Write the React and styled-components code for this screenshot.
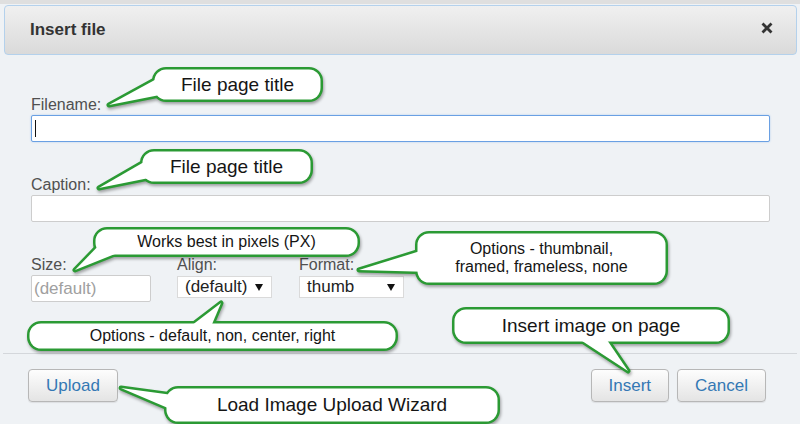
import React from "react";
import styled, { createGlobalStyle } from "styled-components";

const GREEN = "#2b9a34";

const GlobalStyle = createGlobalStyle`
  html, body { margin: 0; padding: 0; }
  body {
    font-family: "Liberation Sans", Arial, sans-serif;
    background: #eff2f5;
  }
  *, *::before, *::after { box-sizing: border-box; }
`;

const Dialog = styled.div`
  position: relative;
  width: 800px;
  height: 424px;
  display: flex;
  flex-direction: column;
  background: #eff2f5;
  border-top: 4px solid #dfdfdf;
  overflow: hidden;
`;

const Header = styled.header`
  flex: none;
  height: 50px;
  margin: 1px 3px 0 4px;
  padding: 0 23px 0 25px;
  display: flex;
  align-items: center;
  justify-content: space-between;
  border: 1px solid #b4d1ec;
  border-radius: 4px;
  background: linear-gradient(#f0f0f0, #dadada);
`;

const Title = styled.h1`
  margin: 0;
  font-size: 17px;
  font-weight: 700;
  color: #333;
`;

const CloseIcon = styled.svg`
  width: 12px;
  height: 12px;
  margin-top: -4px;
`;

const Form = styled.div`
  flex: 1;
  padding: 40px 30px 0 31px;
  display: flex;
  flex-direction: column;
  gap: 33px;
`;

const Field = styled.div`
  flex: none;
  display: flex;
  flex-direction: column;
  width: ${(p) => p.$width || "auto"};
`;

const Label = styled.label`
  height: 20px;
  line-height: 20px;
  font-size: 16px;
  color: #505050;
`;

const TextBox = styled.div`
  position: relative;
  height: 27px;
  width: ${(p) => p.$width || "100%"};
  display: flex;
  align-items: center;
  padding: 0 2px;
  background: #fff;
  border: 1px solid ${(p) => (p.$focused ? "#6aa0e3" : "#cdcdcd")};
  border-radius: 2px;
  box-shadow: ${(p) => (p.$focused ? "0 0 2px rgba(90,150,230,0.45)" : "none")};
  font-size: 17px;
  color: ${(p) => (p.$placeholder ? "#a0a0a0" : "#222")};
`;

const Caret = styled.span`
  width: 1px;
  height: 17px;
  margin-left: 1px;
  background: #111;
`;

const OptionsRow = styled.div`
  display: flex;
`;

const SelectBox = styled.div`
  width: ${(p) => p.$width};
  height: 22px;
  margin-top: 1px;
  padding: 0 8px 0 7px;
  display: flex;
  align-items: center;
  justify-content: space-between;
  background: #fff;
  border: 1px solid #dadada;
  font-size: 17px;
  color: #222;
`;

const Arrow = styled.svg`
  width: 8px;
  height: 8px;
`;

const Footer = styled.footer`
  flex: none;
  height: 71px;
  margin: 0 3px;
  padding: 15px 31px 0 25px;
  display: flex;
  justify-content: space-between;
  align-items: flex-start;
  border-top: 1px solid #d4d7db;
`;

const ButtonGroup = styled.div`
  display: flex;
  gap: 8px;
`;

const Button = styled.button`
  height: 33px;
  padding: 0 17px;
  font-family: "Liberation Sans", Arial, sans-serif;
  font-size: 17px;
  color: #3478b4;
  background: linear-gradient(#fdfdfd, #e4e4e4);
  border: 1px solid #b7b7b7;
  border-radius: 4px;
  box-shadow: 0 1px 1px rgba(0, 0, 0, 0.08);
`;

/* speech-bubble annotations laid over the form */
const Bubble = styled.div`
  position: absolute;
`;

const BubbleArt = styled.svg`
  position: absolute;
  left: 0;
  top: 0;
  overflow: visible;
  filter: drop-shadow(1.5px 2px 1.5px rgba(0, 0, 0, 0.34));
`;

const BubbleText = styled.div`
  position: absolute;
  inset: 0;
  display: flex;
  align-items: center;
  justify-content: center;
  text-align: center;
  font-size: ${(p) => p.$size}px;
  line-height: ${(p) => p.$lh || "1.15"};
  color: #151515;
  white-space: pre-line;
`;

function Callout({ x, y, w, h, tip, base, size = 19, lh, children }) {
  const sw = 2.5;
  const r = 14;
  const rel = (p) => `${p[0] - x} ${p[1] - y}`;
  const tail = `M${rel(base[0])} L${rel(tip)} L${rel(base[1])} Z`;
  const box = { x: sw, y: sw, width: w - sw * 2, height: h - sw * 2, rx: r - sw };
  return (
    <Bubble style={{ left: x, top: y, width: w, height: h }}>
      <BubbleArt width={w} height={h}>
        <g fill={GREEN} stroke={GREEN} strokeWidth={sw * 2} strokeLinejoin="round">
          <rect {...box} />
          <path d={tail} />
        </g>
        <g fill="#fff">
          <rect {...box} />
          <path d={tail} />
        </g>
      </BubbleArt>
      <BubbleText $size={size} $lh={lh}>
        {children}
      </BubbleText>
    </Bubble>
  );
}

const DownArrow = () => (
  <Arrow viewBox="0 0 8 8">
    <polygon points="0,1 8,1 4,8" fill="#111" />
  </Arrow>
);

export default function App() {
  return (
    <>
      <GlobalStyle />
      <Dialog>
        <Header>
          <Title>Insert file</Title>
          <CloseIcon viewBox="0 0 12 12">
            <path d="M1.5 1.5 L10.5 10.5 M10.5 1.5 L1.5 10.5" stroke="#333" strokeWidth="2.8" />
          </CloseIcon>
        </Header>

        <Form>
          <Field>
            <Label>Filename:</Label>
            <TextBox $focused>
              <Caret />
            </TextBox>
          </Field>

          <Field>
            <Label>Caption:</Label>
            <TextBox />
          </Field>

          <OptionsRow>
            <Field $width="146px">
              <Label>Size:</Label>
              <TextBox $width="120px" $placeholder>
                (default)
              </TextBox>
            </Field>
            <Field $width="122px">
              <Label>Align:</Label>
              <SelectBox $width="95px">
                (default)
                <DownArrow />
              </SelectBox>
            </Field>
            <Field>
              <Label>Format:</Label>
              <SelectBox $width="105px">
                thumb
                <DownArrow />
              </SelectBox>
            </Field>
          </OptionsRow>
        </Form>

        <Footer>
          <Button>Upload</Button>
          <ButtonGroup>
            <Button>Insert</Button>
            <Button>Cancel</Button>
          </ButtonGroup>
        </Footer>

        <Callout x={152} y={63} w={171} h={35} tip={[109, 101]} base={[[162, 72], [170, 89]]}>
          File page title
        </Callout>
        <Callout x={140} y={145} w={173} h={35} tip={[99, 184]} base={[[151, 154], [159, 172]]}>
          File page title
        </Callout>
        <Callout x={93} y={223} w={267} h={30} size={16} tip={[75, 266]} base={[[105, 235], [120, 248]]}>
          Works best in pixels (PX)
        </Callout>
        <Callout x={415} y={227} w={253} h={54} size={16} lh="18px" tip={[359, 266]} base={[[430, 244], [432, 268]]}>
          {"Options - thumbnail,\nframed, frameless, none"}
        </Callout>
        <Callout x={27} y={317} w={371} h={30} size={16} tip={[221, 299]} base={[[187, 325], [210, 325]]}>
          Options - default, non, center, right
        </Callout>
        <Callout x={452} y={303} w={278} h={37} tip={[628, 367]} base={[[576, 333], [605, 333]]}>
          Insert image on page
        </Callout>
        <Callout x={164} y={382} w={336} h={38} tip={[121, 384]} base={[[180, 392], [175, 407]]}>
          Load Image Upload Wizard
        </Callout>
      </Dialog>
    </>
  );
}
